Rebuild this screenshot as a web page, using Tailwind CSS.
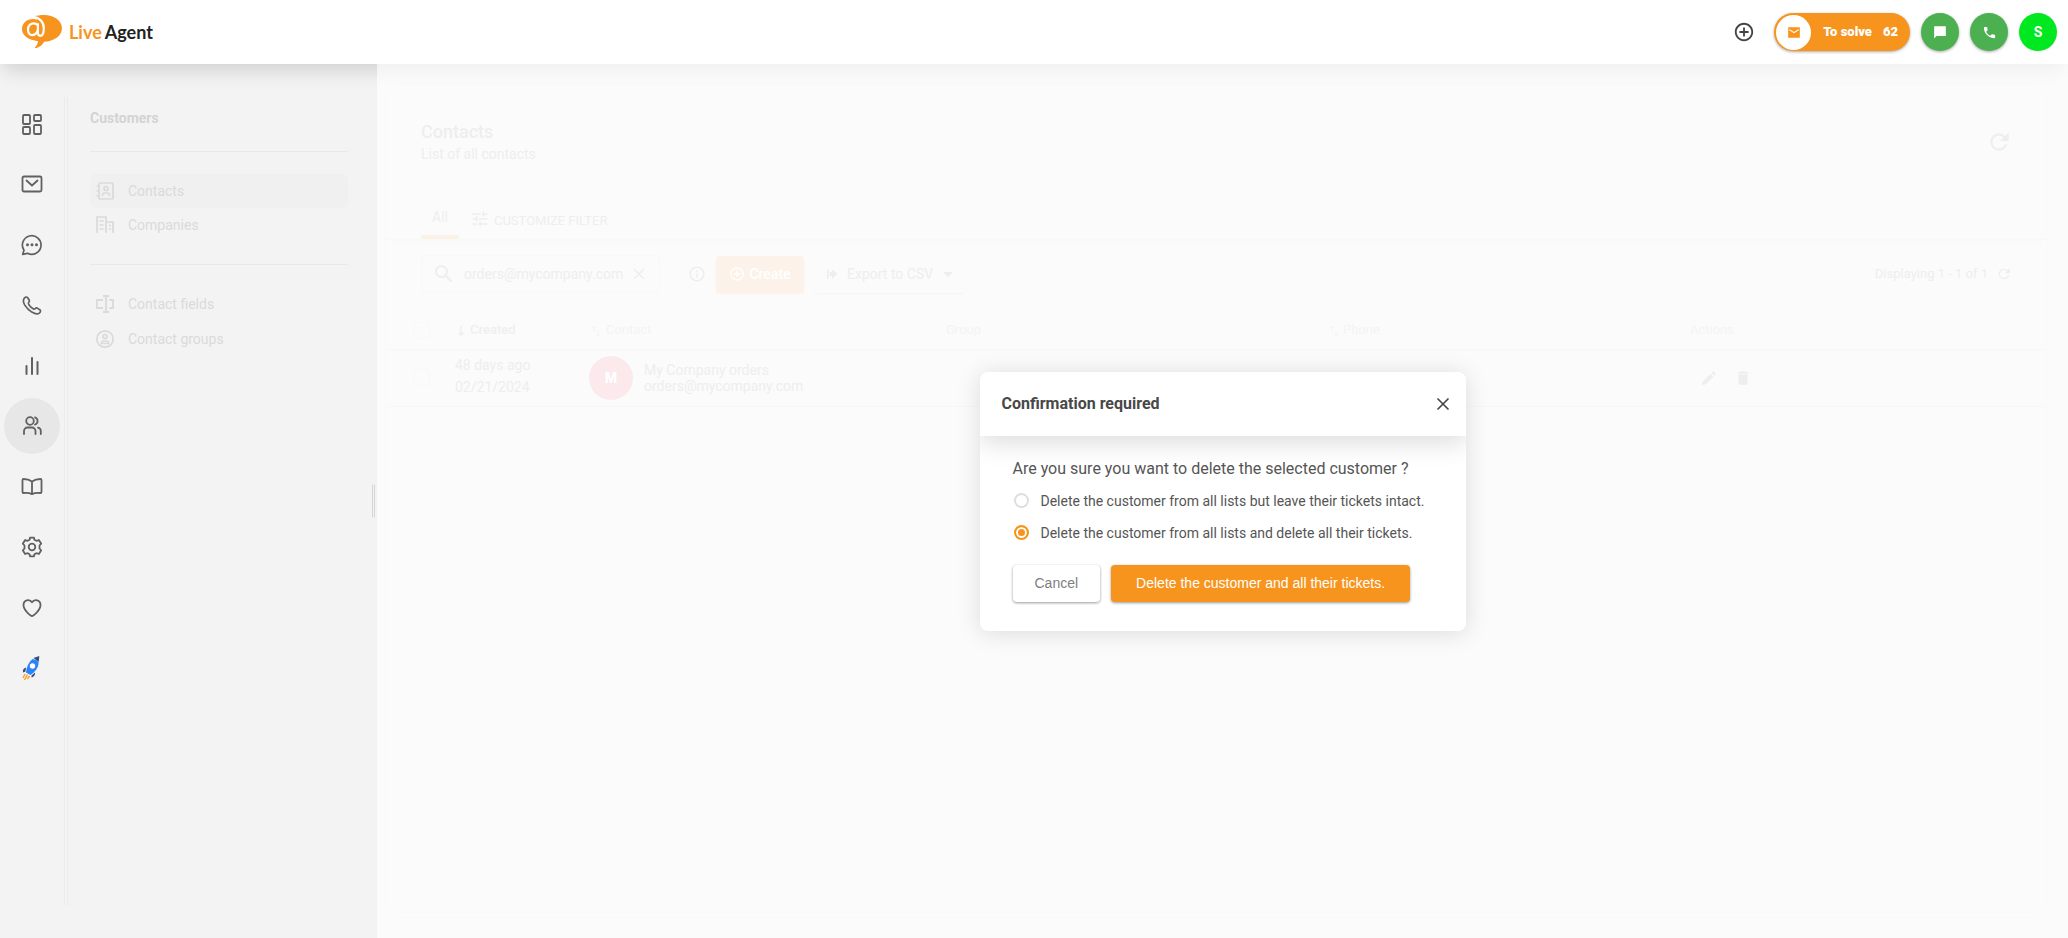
<!DOCTYPE html>
<html lang="en">
  <head>
    <meta charset="UTF-8" />
    <meta name="viewport" content="width=device-width, initial-scale=1.0" />
    <title>LiveAgent - Contacts</title>
    <script src="https://cdn.jsdelivr.net/npm/@tailwindcss/browser@4"></script>
  </head>
  <body class="flex h-screen flex-col overflow-hidden bg-[#fbfbfb] font-[Roboto,sans-serif] text-sm text-[#555]">
    <header class="relative z-10 flex h-16 shrink-0 items-center justify-between bg-white pr-[11px] pl-[22px]">
      <a href="#" class="flex items-center gap-[7px]" aria-label="LiveAgent">
        <svg class="h-[34px] w-10" viewBox="0 0 40 34">
          <path d="M12 1.500C15 .5 18.500 0 22 0c10 0 18 5.800 18 13.200S32 26.500 22 26.700c-1.500 3-4.500 6.300-9.500 6.300 2-1.800 3.200-4.200 3.500-6.800C7 25 0 21 0 14 0 8 5 4 11 4c1.500 0 3 .3 4.200.7C14.500 3.300 13.500 2.200 12 1.500z" fill="#f7941d" />
          <path d="M11.500 2.200c6 .2 10.300 5 10.300 11 0 3.800-1 7.600-3.600 7.600-1.700 0-2.300-1.200-2.300-3V8.300M15.900 10.300c-1-1.400-2.400-2-4-2-3.600 0-5.900 2.600-5.900 6.300 0 3.300 1.700 5.500 4.300 5.500 3 0 5.600-2.700 5.600-6.500" fill="none" stroke="#fff" stroke-width="2.200" />
        </svg>
        <span class="font-[Lato,sans-serif] text-lg font-bold text-[#222]"><span class="mr-[3px] text-[#f7941d]">Live</span>Agent</span>
      </a>
      <div class="flex items-center gap-[11px]">
        <button class="mr-2" aria-label="New">
          <svg class="size-[22px]" viewBox="0 0 24 24" fill="#444"><path d="M13 7h-2v4H7v2h4v4h2v-4h4v-2h-4V7zm-1-5C6.480 2 2 6.480 2 12s4.480 10 10 10 10-4.480 10-10S17.520 2 12 2zm0 18c-4.410 0-8-3.590-8-8s3.590-8 8-8 8 3.590 8 8-3.590 8-8 8z" /></svg>
        </button>
        <button class="flex h-[38px] items-center rounded-full bg-[#f7941d] pr-3 pl-[2px] text-[13px] font-black text-white shadow-[0_1px_3px_rgba(0,0,0,0.35)]">
          <span class="mr-3 flex size-[35px] items-center justify-center rounded-full bg-white">
            <svg class="size-[14px]" viewBox="0 0 24 24" fill="#f7941d"><path d="M22 4H2v18h20V4zm-2 5-8 5-8-5V7l8 5 8-5v2z" /></svg>
          </span>
          To solve<span class="ml-[11px]">62</span>
        </button>
        <button class="flex size-[38px] items-center justify-center rounded-full bg-[#4caf50] shadow-[0_1px_3px_rgba(0,0,0,0.35)]" aria-label="Chat">
          <svg class="size-[14px]" viewBox="0 0 24 24" fill="#fff"><path d="M22 2H2v21l4-4h16V2z" /></svg>
        </button>
        <button class="flex size-[38px] items-center justify-center rounded-full bg-[#4caf50] shadow-[0_1px_3px_rgba(0,0,0,0.35)]" aria-label="Call">
          <svg class="size-[15px]" viewBox="0 0 24 24" fill="#fff"><path d="M6.620 10.790c1.440 2.830 3.760 5.140 6.590 6.590l2.200-2.200c.27-.27.67-.36 1.020-.24 1.120.37 2.330.57 3.570.57.55 0 1 .45 1 1V20c0 .55-.45 1-1 1-9.390 0-17-7.610-17-17 0-.55.45-1 1-1h3.500c.55 0 1 .45 1 1 0 1.250.2 2.450.57 3.570.11.35.03.74-.25 1.020l-2.200 2.200z" /></svg>
        </button>
        <button class="size-[38px] rounded-full bg-[#00e820] text-sm font-bold text-white shadow-[0_1px_2px_rgba(0,0,0,0.1)]">S</button>
      </div>
    </header>

    <div class="flex min-h-0 flex-1">
      <aside class="relative flex w-[377px] shrink-0 overflow-hidden bg-[#f3f3f3]">
        <div class="absolute -top-16 -right-8 left-0 h-16 shadow-[0_10px_20px_-4px_rgba(0,0,0,0.15)]"></div>

        <!-- icon rail -->
        <nav class="flex h-[632px] w-16 shrink-0 flex-col items-center justify-between pt-8 text-[#606060]">
          <a href="#" class="flex size-14 items-center justify-center" aria-label="Dashboard">
            <svg class="size-6" viewBox="0 0 24 24" fill="none" stroke="currentColor" stroke-width="1.800"><rect x="3" y="3" width="7" height="9" rx="1" /><rect x="14" y="3" width="7" height="6" rx="1" /><rect x="14" y="13" width="7" height="9" rx="1" /><rect x="3" y="15" width="7" height="7" rx="1" /></svg>
          </a>
          <a href="#" class="flex size-14 items-center justify-center" aria-label="Tickets">
            <svg class="size-6" viewBox="0 0 24 24" fill="none" stroke="currentColor" stroke-width="1.800" stroke-linecap="round" stroke-linejoin="round"><rect x="2.500" y="4.500" width="19" height="15" rx="1.500" /><path d="m6.500 8.500 5.500 5 5.500-5" /></svg>
          </a>
          <a href="#" class="flex size-14 items-center justify-center" aria-label="Chats">
            <svg class="size-6" viewBox="0 0 24 24" fill="none" stroke="currentColor" stroke-width="1.700" stroke-linejoin="round"><path d="M2.700 21.300 4 17.200A9.300 9.300 0 1 1 7.500 20.300z" /><path d="M7.500 11.700h.01M12 11.700h.01M16.500 11.700h.01" stroke-width="3" stroke-linecap="round" /></svg>
          </a>
          <a href="#" class="flex size-14 items-center justify-center" aria-label="Calls">
            <svg class="size-6" viewBox="0 0 24 24" fill="none" stroke="currentColor" stroke-width="1.700" stroke-linejoin="round"><path d="M4.200 5.200c1-1.300 2.600-1.600 3.500-.5l1.600 2.600c.5 1-.2 1.700-.7 2.200-.6.700-.2 1.500.5 2.500 1 1.400 2 2.400 3.300 3.300 1 .7 1.900 1.100 2.600.5.500-.5 1.300-1.200 2.200-.7l2.600 1.600c1.100.9.8 2.500-.5 3.500-1.800 1.400-4.500.7-7.500-1.100-3-1.900-5.100-4-7-7-1.500-2.600-1.900-5.100-.6-6.900z" /></svg>
          </a>
          <a href="#" class="flex size-14 items-center justify-center" aria-label="Reports">
            <svg class="size-6" viewBox="0 0 24 24" fill="none" stroke="currentColor" stroke-width="2" stroke-linecap="round"><path d="M6.500 12v8M12 4v16M17.500 8v12" /></svg>
          </a>
          <a href="#" class="flex size-14 items-center justify-center rounded-full bg-[#e7e7e7]" aria-label="Customers" aria-current="page">
            <svg class="size-6" viewBox="0 0 24 24" fill="none" stroke="currentColor" stroke-width="1.800" stroke-linecap="round"><circle cx="10" cy="7" r="3.800" /><path d="M4 20v-3a3.500 3.500 0 0 1 3.500-3.500h4.500a3.500 3.500 0 0 1 3.500 3.500v3M15 3.400a3.800 3.800 0 0 1 0 7.200M18 13.700c2 .5 2.800 1.600 2.800 3.300v3" /></svg>
          </a>
          <a href="#" class="flex size-14 items-center justify-center" aria-label="Knowledge base">
            <svg class="size-6" viewBox="0 0 24 24" fill="none" stroke="currentColor" stroke-width="1.800" stroke-linejoin="round"><path d="M12 6.500C10 5 7 4 3.500 4c-.6 0-1 .4-1 1v12c0 .6.400 1 1 1 3.500-.3 6.500 0 8.500 1.200 2-1.200 5-1.500 8.500-1.200.6 0 1-.4 1-1V5c0-.6-.4-1-1-1C17 4 14 5 12 6.500zm0 0v12.700" /></svg>
          </a>
          <a href="#" class="flex size-14 items-center justify-center" aria-label="Configuration">
            <svg class="size-6" viewBox="0 0 24 24" fill="none" stroke="currentColor" stroke-width="1.800" stroke-linejoin="round"><path d="M9.600 4.700 10 2.700h4l.4 2 1.900 1.100 2.600-.8 2.300 3.700-1.700 1.800v3l1.700 1.800-2.300 3.700-2.600-.8-1.900 1.100-.4 2h-4l-.4-2-1.900-1.100-2.600.8-2.300-3.700 1.700-1.800v-3L2.800 8.700 5.100 5l2.600.8z" /><circle cx="12" cy="12" r="3.300" /></svg>
          </a>
          <a href="#" class="flex size-14 items-center justify-center" aria-label="Favourites">
            <svg class="size-6" viewBox="0 0 24 24" fill="none" stroke="currentColor" stroke-width="1.800" stroke-linejoin="round"><path d="M12 20c-1 0-8.500-5.500-8.500-11 0-5 6-6.500 8.500-2.800C14.500 2.500 20.500 4 20.500 9c0 5.500-7.500 11-8.500 11z" /></svg>
          </a>
          <a href="#" class="flex size-14 items-center justify-center" aria-label="Getting started">
            <svg class="size-6" viewBox="0 0 24 24">
              <path d="m13.500 2 5.800-2-.5 6z" fill="#32507a" />
              <path d="M12.500 3c3 .3 5 1.500 6 3.500.2 5-3.500 9.500-8 12.500L6 16.500C6.500 11 8.500 6.500 12.500 3z" fill="#2b83fa" />
              <path d="M6 11.500c-2.500.5-3.500 2.500-3 5l2.500-1zM11.500 19.500l3.500-3c.5 2-.8 4.500-3.500 5z" fill="#32507a" />
              <circle cx="12.500" cy="10" r="2.700" fill="#fff" />
              <path d="m5 18-2 4M7.500 18.500 4.500 24M9.500 20l-2 3" stroke="#f7a23b" stroke-width="1.500" />
            </svg>
          </a>
        </nav>
        <div class="my-[33px] w-1 shrink-0 border-x border-[#ebebeb]"></div>

        <!-- section menu -->
        <div class="flex-1 pt-11 pr-[29px] pl-[22px] text-[#dadada]">
          <h2 class="pb-[23px] leading-5 font-bold text-[#d3d3d3]">Customers</h2>
          <ul class="border-y border-[#e8e8e8] py-[22px]">
            <li>
              <a href="#" class="flex h-[34px] items-center gap-[13px] rounded-md bg-[#f0f0f0] px-[5px]">
                <svg class="size-5" viewBox="0 0 20 20" fill="none" stroke="currentColor" stroke-width="1.700"><rect x="4" y="2" width="14" height="16" rx="1" /><circle cx="11" cy="7.500" r="2" /><path d="M7.500 15v-1a2 2 0 0 1 2-2h3a2 2 0 0 1 2 2v1M1.500 5H4M1.500 10H4M1.500 15H4" /></svg>
                <span>Contacts</span>
              </a>
            </li>
            <li>
              <a href="#" class="flex h-[34px] items-center gap-[13px] px-[5px]">
                <svg class="size-5" viewBox="0 0 20 20" fill="none" stroke="currentColor" stroke-width="1.700"><path d="M2 18V2h9v16M11 7h7v11M4.500 6h4M4.500 10h4M4.500 14h4M14 10.500h2M14 14h2" /></svg>
                <span>Companies</span>
              </a>
            </li>
          </ul>
          <ul class="flex flex-col gap-px pt-[22px]">
            <li>
              <a href="#" class="flex h-[34px] items-center gap-[13px] px-[5px]">
                <svg class="size-5" viewBox="0 0 20 20" fill="none" stroke="currentColor" stroke-width="1.800"><path d="M8 6H2v8h6M14.500 6H18v8h-3.500M11 2v16M8 2h6M8 18h6" /></svg>
                <span>Contact fields</span>
              </a>
            </li>
            <li>
              <a href="#" class="flex h-[34px] items-center gap-[13px] px-[5px]">
                <svg class="size-5" viewBox="0 0 20 20" fill="none" stroke="currentColor" stroke-width="1.700"><circle cx="10" cy="10" r="8.200" /><circle cx="10" cy="7.500" r="2" /><path d="M6.500 14.500V14a2 2 0 0 1 2-2h3a2 2 0 0 1 2 2v.5z" /></svg>
                <span>Contact groups</span>
              </a>
            </li>
          </ul>
        </div>
        <div class="absolute top-1/2 right-[2px] h-[33px] w-[3px] -translate-y-1/2 border-x border-[#d6d6d6]"></div>
      </aside>

      <main class="relative min-w-0 flex-1 overflow-hidden pt-[22px] pr-[22px] pb-[22px] pl-[10px]">
        <div class="absolute -top-16 right-0 -left-8 h-16 shadow-[0_10px_20px_-4px_rgba(0,0,0,0.05)]"></div>

        <section class="relative h-full rounded-lg bg-[#fbfbfb] text-[#eee] shadow-[0_0_16px_rgba(0,0,0,0.012)]">
          <div class="flex items-start justify-between pt-[34px] pr-[34px] pl-[34px]">
            <div>
              <h1 class="text-lg leading-6 font-medium">Contacts</h1>
              <p class="leading-5">List of all contacts</p>
            </div>
            <button class="mt-[9px]" aria-label="Reload page">
              <svg class="size-[26px]" viewBox="0 0 24 24" fill="currentColor"><path d="M17.650 6.350A7.958 7.958 0 0 0 12 4a8 8 0 1 0 7.730 10h-2.080A6 6 0 1 1 12 6c1.660 0 3.140.69 4.220 1.780L13 11h8V3l-3.350 3.350z" /></svg>
            </button>
          </div>

          <div class="flex border-b border-[#f8f8f8] pt-[39px] pl-[34px] shadow-[0_8px_12px_-4px_rgba(0,0,0,0.012)]">
            <button class="h-[36px] border-b-4 border-[#fcf1e6] px-[11px] pb-1 leading-5">All</button>
            <button class="flex h-[36px] items-center gap-1 px-[11px] text-[13px]">
              <svg class="mb-1 size-5" viewBox="0 0 24 24" fill="currentColor"><path d="M3 17v2h6v-2H3zM3 5v2h10V5H3zm10 16v-2h8v-2h-8v-2h-2v6h2zM7 9v2H3v2h4v2h2V9H7zm14 4v-2H11v2h10zm-6-4h2V7h4V5h-4V3h-2v6z" /></svg>
              <span>CUSTOMIZE FILTER</span>
            </button>
          </div>

          <div class="flex items-center justify-between pt-[15px] pr-[34px] pl-[34px]">
            <div class="flex items-center">
              <div class="flex h-[38px] w-[239px] items-center rounded-sm border border-[#f8f8f8] pr-3 pl-[10px]">
                <svg class="size-6 shrink-0" viewBox="0 0 24 24" fill="currentColor"><path d="M15.500 14h-.79l-.28-.27A6.471 6.471 0 0 0 16 9.500 6.500 6.500 0 1 0 9.500 16c1.610 0 3.090-.59 4.230-1.570l.27.28v.79l5 4.990L20.490 19l-4.990-5zm-6 0C7.010 14 5 11.990 5 9.500S7.010 5 9.500 5 14 7.010 14 9.500 11.990 14 9.500 14z" /></svg>
                <input type="text" value="orders@mycompany.com" aria-label="Search contacts" class="ml-2 w-0 flex-1 outline-none" />
                <button aria-label="Clear search">
                  <svg class="size-4" viewBox="0 0 16 16" fill="none" stroke="currentColor" stroke-width="1.500"><path d="m3 3 10 10M13 3 3 13" /></svg>
                </button>
              </div>
              <button class="mr-[10px] ml-7" aria-label="Info">
                <svg class="size-[18px]" viewBox="0 0 24 24" fill="currentColor"><path d="M11 7h2v2h-2zm0 4h2v6h-2zm1-9C6.480 2 2 6.480 2 12s4.480 10 10 10 10-4.480 10-10S17.520 2 12 2zm0 18c-4.410 0-8-3.590-8-8s3.590-8 8-8 8 3.590 8 8-3.590 8-8 8z" /></svg>
              </button>
              <button class="mr-[10px] flex h-[37px] w-[88px] items-center justify-center gap-1 rounded-sm bg-[#fcf2e9] font-medium text-white shadow-[0_1px_2px_rgba(0,0,0,0.03)]">
                <svg class="size-4" viewBox="0 0 24 24" fill="currentColor"><path d="M13 7h-2v4H7v2h4v4h2v-4h4v-2h-4V7zm-1-5C6.480 2 2 6.480 2 12s4.480 10 10 10 10-4.480 10-10S17.520 2 12 2zm0 18c-4.410 0-8-3.590-8-8s3.590-8 8-8 8 3.590 8 8-3.590 8-8 8z" /></svg>
                Create
              </button>
              <button class="flex h-[37px] items-center rounded-sm px-3 shadow-[0_1px_2px_rgba(0,0,0,0.03)]">
                <svg class="mr-[9px] size-3" viewBox="0 0 12 12" fill="currentColor"><path d="M1 1h1.500v10H1zM3.500 4H6V1l5.500 5L6 11V8H3.500z" /></svg>
                Export to CSV
                <svg class="ml-[10px] h-[5px] w-[10px]" viewBox="0 0 10 5" fill="currentColor"><path d="M0 0h10L5 5z" /></svg>
              </button>
            </div>
            <div class="flex items-center gap-2 text-[13px]">
              <span>Displaying 1 - 1 of 1</span>
              <button aria-label="Reload list">
                <svg class="size-4" viewBox="0 0 24 24" fill="currentColor"><path d="M17.650 6.350A7.958 7.958 0 0 0 12 4a8 8 0 1 0 7.730 10h-2.080A6 6 0 1 1 12 6c1.660 0 3.140.69 4.220 1.780L13 11h8V3l-3.350 3.350z" /></svg>
              </button>
            </div>
          </div>

          <table class="mt-5 w-full table-fixed text-left">
            <thead class="border-b border-[#f7f7f7] text-[13px] text-[#f4f4f4]">
              <tr class="h-9">
                <th class="w-[68px] pl-[26px]"><input type="checkbox" aria-label="Select all" class="block size-[17px] appearance-none rounded-sm border border-[#f8f8f8]" /></th>
                <th class="w-[134px] font-medium text-[#efefef]">
                  <div class="flex items-center gap-[5px]"><svg class="ml-[2px] h-[10px] w-2" viewBox="0 0 8 10" fill="none" stroke="currentColor" stroke-width="1.500"><path d="M4 0v9M1.500 6.500 4 9l2.500-2.500" /></svg>Created</div>
                </th>
                <th class="w-[357px] font-normal">
                  <div class="flex items-center gap-[6px] pl-[3px]"><svg class="h-[10px] w-2" viewBox="0 0 8 10" fill="none" stroke="currentColor"><path d="M2 6V0M0 2l2-2 2 2M6 4v6M4 8l2 2 2-2" /></svg>Contact</div>
                </th>
                <th class="w-[384px] font-normal">Group</th>
                <th class="w-[360px] font-normal">
                  <div class="flex items-center gap-[5px]"><svg class="h-[10px] w-2" viewBox="0 0 8 10" fill="none" stroke="currentColor"><path d="M2 6V0M0 2l2-2 2 2M6 4v6M4 8l2 2 2-2" /></svg>Phone</div>
                </th>
                <th class="font-normal">Actions</th>
              </tr>
            </thead>
            <tbody>
              <tr class="h-[57px] border-b border-[#f7f7f7]">
                <td class="pl-[26px]"><input type="checkbox" aria-label="Select contact" class="block size-[17px] appearance-none rounded-sm border border-[#f8f8f8]" /></td>
                <td class="pb-1 leading-[22px]">48 days ago<br />02/21/2024</td>
                <td>
                  <div class="flex items-center gap-[11px]">
                    <span class="flex size-11 items-center justify-center rounded-full bg-[#fce9ec] font-black text-white">M</span>
                    <span class="leading-4">My Company orders<br />orders@mycompany.com</span>
                  </div>
                </td>
                <td></td>
                <td></td>
                <td>
                  <div class="flex items-center gap-4 pl-[10px]">
                    <button aria-label="Edit"><svg class="size-[18px]" viewBox="0 0 24 24" fill="currentColor"><path d="M3 17.250V21h3.750L17.810 9.940l-3.750-3.750L3 17.250zM20.710 7.040a1 1 0 0 0 0-1.410l-2.340-2.340a1 1 0 0 0-1.410 0l-1.830 1.830 3.750 3.750 1.830-1.830z" /></svg></button>
                    <button aria-label="Delete"><svg class="size-[18px]" viewBox="0 0 24 24" fill="currentColor"><path d="M6 19c0 1.100.9 2 2 2h8c1.100 0 2-.9 2-2V7H6v12zM19 4h-3.500l-1-1h-5l-1 1H5v2h14V4z" /></svg></button>
                  </div>
                </td>
              </tr>
            </tbody>
          </table>
        </section>

        <!-- delete confirmation -->
        <div class="absolute inset-0 flex items-center justify-center">
          <form role="dialog" aria-labelledby="dialog-title" class="w-[486px] overflow-hidden rounded-lg bg-white shadow-[0_2px_24px_rgba(0,0,0,0.13)]">
            <div class="flex h-16 items-center justify-between pr-4 pl-[22px] shadow-[0_8px_24px_rgba(0,0,0,0.13)]">
              <h2 id="dialog-title" class="text-base font-bold text-[#484848]">Confirmation required</h2>
              <button type="button" aria-label="Close">
                <svg class="size-[14px]" viewBox="0 0 14 14" fill="none" stroke="#444" stroke-width="1.600"><path d="m1.500 1.500 11 11M12.500 1.500l-11 11" /></svg>
              </button>
            </div>
            <div class="px-[33px] pt-[21px] pb-[29px]">
              <p class="text-base">Are you sure you want to delete the selected customer ?</p>
              <div class="flex flex-col pt-1 pb-4">
                <label class="flex h-8 items-center gap-3">
                  <input type="radio" name="delete-mode" class="ml-px size-[15px] appearance-none rounded-full border-2 border-[#dedede]" />
                  Delete the customer from all lists but leave their tickets intact.
                </label>
                <label class="flex h-8 items-center gap-3">
                  <input type="radio" name="delete-mode" checked class="ml-px size-[15px] appearance-none rounded-full border-2 border-[#f7941d] bg-[#f7941d] shadow-[inset_0_0_0_2px_#fff]" />
                  Delete the customer from all lists and delete all their tickets.
                </label>
              </div>
              <div class="flex gap-[11px] font-['Liberation_Sans',sans-serif]">
                <button type="button" class="h-[37px] rounded-sm bg-white px-[22px] text-[#808080] shadow-[0_1px_3px_rgba(0,0,0,0.4)]">Cancel</button>
                <button type="submit" class="h-[37px] rounded-sm bg-[#f7941d] px-[25px] text-white shadow-[0_1px_3px_rgba(0,0,0,0.4)]">Delete the customer and all their tickets.</button>
              </div>
            </div>
          </form>
        </div>
      </main>
    </div>
  </body>
</html>
